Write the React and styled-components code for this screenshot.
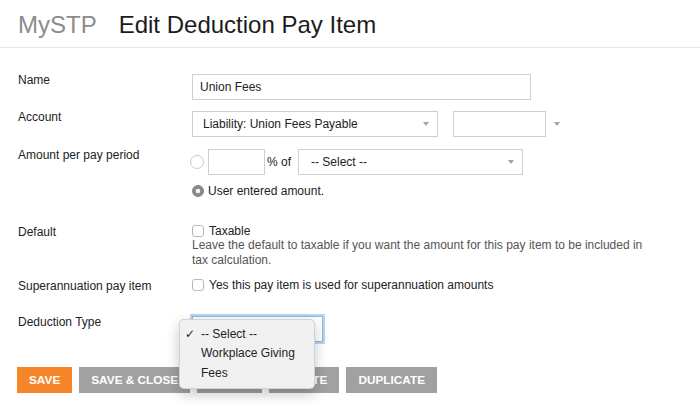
import React from 'react'
import styled, { createGlobalStyle } from 'styled-components'

const GlobalStyle = createGlobalStyle`
  body {
    margin: 0;
    background: #fff;
    color: #222;
    font-family: 'Liberation Sans', Arial, Helvetica, sans-serif;
  }
`

const Page = styled.div`
  position: relative;
  width: 700px;
  height: 417px;
  overflow: hidden;
  background: #fff;
`

const Header = styled.header`
  display: flex;
  align-items: baseline;
  gap: 22px;
  height: 28px;
  padding: 11px 18px 8px;
  border-bottom: 1px solid #e6e6e6;
  font-size: 24px;
  line-height: 28px;
`

const Brand = styled.span`
  color: #8c8c8c;
`

const Title = styled.h1`
  margin: 0;
  font: inherit;
  color: #1c1c1c;
`

const Form = styled.form`
  padding: 26px 18px 0;
`

const Row = styled.div`
  display: grid;
  grid-template-columns: 174px 1fr;
  align-items: start;
  margin-top: ${p => p.$space || 0}px;
`

const Label = styled.label`
  font-size: 12px;
  line-height: 16px;
  margin-top: ${p => (p.$inline ? 0 : -2)}px;
  color: #222;
`

const Line = styled.div`
  display: flex;
  align-items: center;
  margin-top: ${p => p.$space || 0}px;
`

const TextInput = styled.input`
  box-sizing: border-box;
  width: ${p => p.$w}px;
  height: 26px;
  margin: 0;
  padding: 0 7px;
  border: 1px solid #cfcfcf;
  border-radius: 0;
  background: #fff;
  font: 12px 'Liberation Sans', Arial, sans-serif;
  color: #222;
  outline: none;
`

const SelectBox = styled.div`
  position: relative;
  box-sizing: border-box;
  display: flex;
  align-items: center;
  justify-content: space-between;
  width: ${p => p.$w}px;
  height: 26px;
  margin-left: ${p => p.$ml || 0}px;
  padding: 0 8px 0 ${p => p.$pad || 10}px;
  border: 1px solid ${p => (p.$focus ? '#8fb6e6' : '#cfcfcf')};
  box-shadow: ${p => (p.$focus ? '0 0 0 2px #b9d4f4' : 'none')};
  background: #fff;
  font-size: 12px;
  color: #222;
`

const Caret = styled.span`
  width: 0;
  height: 0;
  margin-left: ${p => p.$gap || 0}px;
  border-left: 3px solid transparent;
  border-right: 3px solid transparent;
  border-top: 4px solid #a3a3a3;
`

const Radio = styled.span`
  box-sizing: border-box;
  display: inline-block;
  flex: none;
  width: ${p => (p.$on ? 12 : 14)}px;
  height: ${p => (p.$on ? 12 : 14)}px;
  margin: ${p => (p.$on ? '0 4px 0 0' : '0 4px 0 -2px')};
  border-radius: 50%;
  border: 1px solid ${p => (p.$on ? '#828282' : '#cbcbcb')};
  background: ${p =>
    p.$on ? 'radial-gradient(circle, #f4f4f4 0 2px, #8a8a8a 2.6px)' : '#fff'};
`

const Check = styled.span`
  box-sizing: border-box;
  display: inline-block;
  flex: none;
  width: 12px;
  height: 12px;
  margin-right: 5px;
  border: 1px solid #b8b8b8;
  border-radius: 3px;
  background: #fff;
`

const Text = styled.span`
  font-size: 12px;
  line-height: ${p => p.$lh || 16}px;
  color: #222;
  margin: 0 ${p => p.$mr || 0}px 0 ${p => p.$ml || 0}px;
`

const Help = styled.p`
  margin: 0;
  max-width: 452px;
  font-size: 12px;
  line-height: 15px;
  color: #555;
`

const SelectWrap = styled.div`
  position: relative;
  width: fit-content;
`

const Menu = styled.ul`
  position: absolute;
  left: -13px;
  top: 3px;
  z-index: 10;
  box-sizing: border-box;
  width: 136px;
  margin: 0;
  padding: 5px 0;
  list-style: none;
  background: #f1f1f1;
  border: 1px solid rgba(0, 0, 0, 0.12);
  border-radius: 5px;
  box-shadow: 0 5px 14px rgba(0, 0, 0, 0.22);
`

const MenuItem = styled.li`
  position: relative;
  padding-left: 21px;
  font-size: 12px;
  line-height: 19.3px;
  color: #1e1e1e;

  &::before {
    content: ${p => (p.$checked ? "'\\2713'" : "''")};
    position: absolute;
    left: 5px;
    top: 0;
    font-family: 'DejaVu Sans', sans-serif;
    font-size: 12px;
    font-weight: bold;
  }
`

const ButtonBar = styled.div`
  display: flex;
  gap: 7px;
  margin-top: 25px;
  padding-left: 17px;
`

const Button = styled.button`
  height: 26px;
  margin: 0;
  padding: 0 12px;
  border: 0;
  border-radius: 0;
  background: ${p => (p.$primary ? '#f7862b' : '#a1a1a1')};
  color: #fff;
  font: bold 11.8px/26px 'Liberation Sans', Arial, sans-serif;
  text-transform: uppercase;
  cursor: pointer;
`

const options = ['-- Select --', 'Workplace Giving', 'Fees']

export default function App() {
  return (
    <Page>
      <GlobalStyle />
      <Header>
        <Brand>MySTP</Brand>
        <Title>Edit Deduction Pay Item</Title>
      </Header>

      <Form onSubmit={e => e.preventDefault()}>
        <Row>
          <Label>Name</Label>
          <TextInput $w={339} defaultValue="Union Fees" readOnly />
        </Row>

        <Row $space={11}>
          <Label>Account</Label>
          <Line>
            <SelectBox $w={246}>
              <span>Liability: Union Fees Payable</span>
              <Caret />
            </SelectBox>
            <SelectBox $w={93} $ml={15} />
            <Caret $gap={8} />
          </Line>
        </Row>

        <Row $space={12}>
          <Label>Amount per pay period</Label>
          <div>
            <Line>
              <Radio />
              <TextInput $w={57} readOnly />
              <Text $ml={2} $mr={7}>% of</Text>
              <SelectBox $w={225} $pad={12}>
                <span>-- Select --</span>
                <Caret />
              </SelectBox>
            </Line>
            <Line $space={8}>
              <Radio $on />
              <Text>User entered amount.</Text>
            </Line>
          </div>
        </Row>

        <Row $space={25}>
          <Label $inline>Default</Label>
          <div>
            <Line>
              <Check />
              <Text $lh={14}>Taxable</Text>
            </Line>
            <Help>
              Leave the default to taxable if you want the amount for this pay item to be
              included in tax calculation.
            </Help>
          </div>
        </Row>

        <Row $space={10}>
          <Label $inline>Superannuation pay item</Label>
          <Line>
            <Check />
            <Text $lh={14}>Yes this pay item is used for superannuation amounts</Text>
          </Line>
        </Row>

        <Row $space={22}>
          <Label>Deduction Type</Label>
          <SelectWrap>
            <SelectBox $w={131} $focus />
            <Menu>
              {options.map((o, i) => (
                <MenuItem key={o} $checked={i === 0}>
                  {o}
                </MenuItem>
              ))}
            </Menu>
          </SelectWrap>
        </Row>
      </Form>

      <ButtonBar>
        <Button $primary>Save</Button>
        <Button>Save &amp; Close</Button>
        <Button>Close</Button>
        <Button>Delete</Button>
        <Button>Duplicate</Button>
      </ButtonBar>
    </Page>
  )
}
